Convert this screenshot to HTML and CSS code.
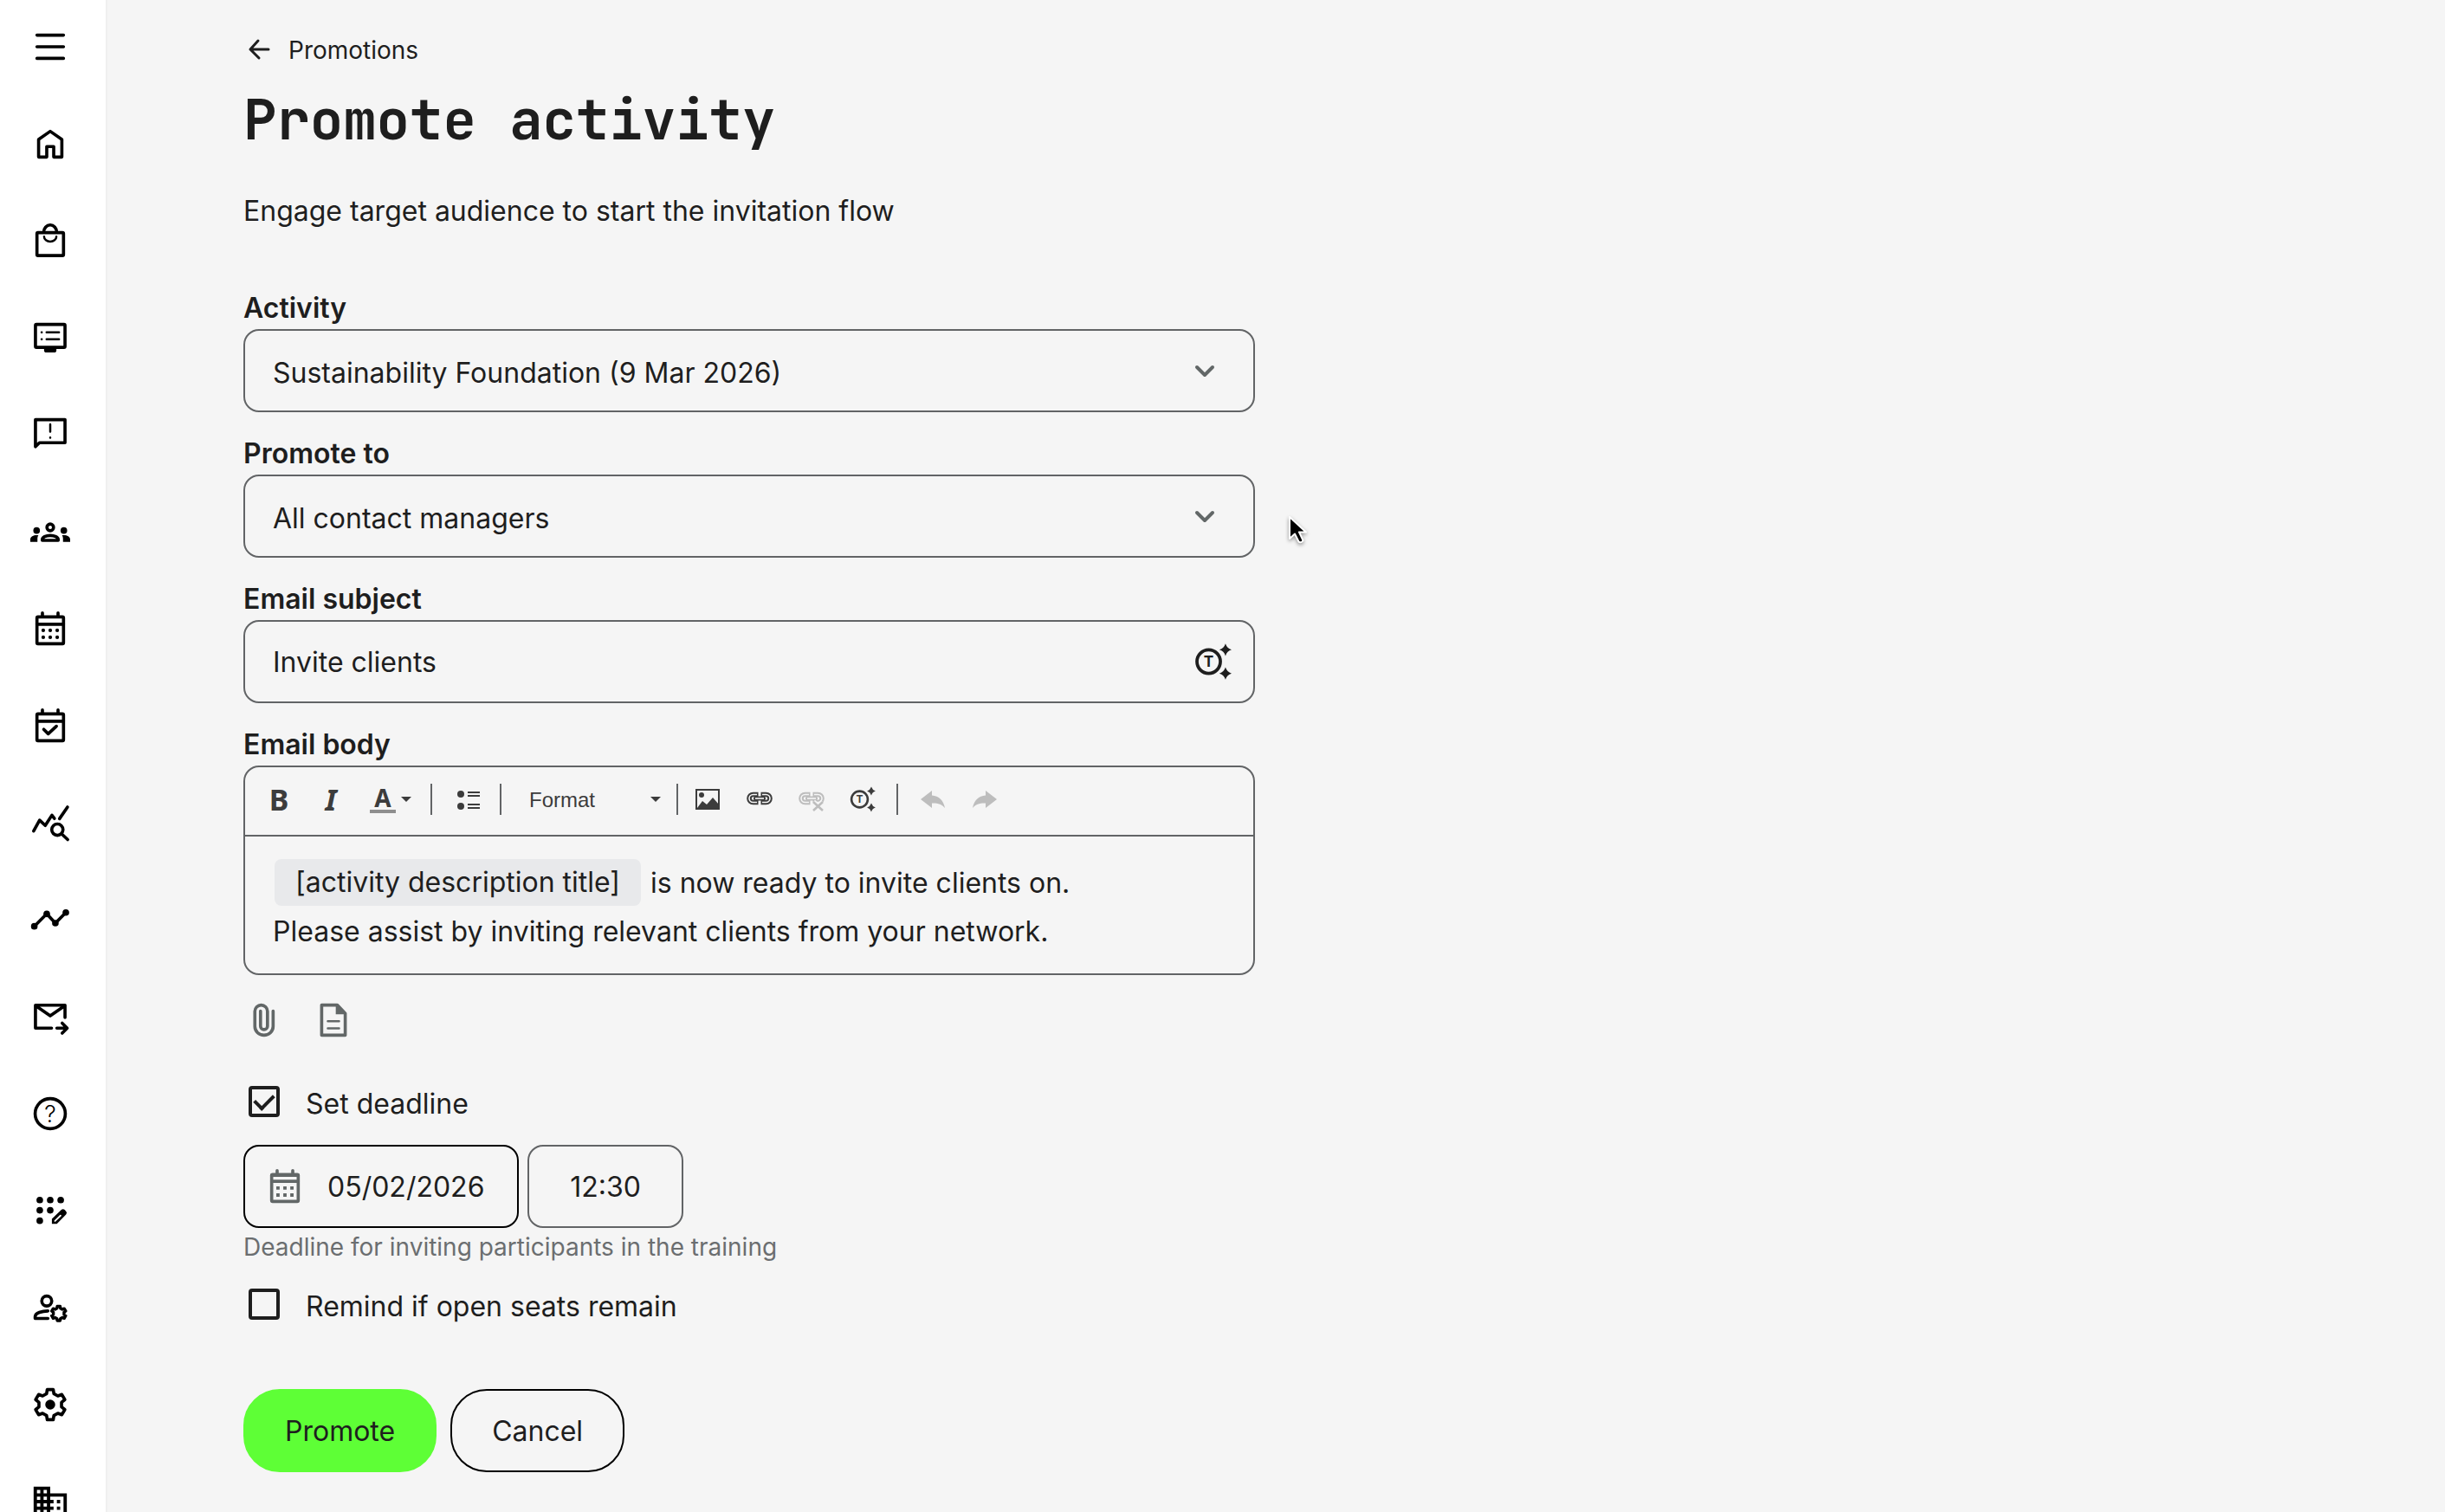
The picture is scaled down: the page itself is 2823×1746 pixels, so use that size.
FILE: index.html
```
<!DOCTYPE html>
<html lang="en">
<head>
    <meta charset="UTF-8">
    <meta name="viewport" content="width=device-width, initial-scale=1">
    <title>Promote activity</title>
    <link rel="stylesheet" href="styles.css">
</head>
<body>
    <!-- Shared icons -->
    <svg class="sprite" aria-hidden="true">
        <symbol id="gear" viewBox="0 0 24 24">
            <path d="M9.8 5.4 10.2 2.9H13.8L14.2 5.4 16.6 6.8 19 5.9 20.8 9 18.8 10.6V13.4L20.8 15 19 18.1 16.6 17.2 14.2 18.6 13.8 21.1H10.2L9.8 18.6 7.4 17.2 5 18.1 3.2 15 5.2 13.4V10.6L3.2 9 5 5.9 7.4 6.8z"/>
        </symbol>
        <symbol id="text-ai" viewBox="0 0 32 32">
            <circle cx="11.5" cy="16" r="9.4" fill="none" stroke="currentColor" stroke-width="2.6"/>
            <text x="11.5" y="20.4" text-anchor="middle" class="icon-letter">T</text>
            <path fill="currentColor" d="M25 1.6q1.200 3.700 4.900 4.900-3.700 1.200-4.900 4.900-1.200-3.700-4.900-4.900 3.700-1.200 4.900-4.900zM25 20.600q1.200 3.700 4.900 4.900-3.700 1.200-4.900 4.900-1.200-3.700-4.900-4.900 3.700-1.200 4.900-4.900z"/>
        </symbol>
        <symbol id="chain" viewBox="0 0 32 32">
            <path fill="none" stroke="currentColor" stroke-width="5.6" d="M14.5 10.5h-6a4.5 4.5 0 0 0 0 9h6M17.5 10.5h6a4.5 4.5 0 0 1 0 9h-6"/>
            <path fill="none" stroke="#f5f5f5" stroke-width="1.6" d="M13 10.5H8.500a4.5 4.5 0 0 0 0 9H13M19 10.5h4.500a4.5 4.5 0 0 1 0 9H19"/>
            <path fill="none" stroke="currentColor" stroke-width="5" stroke-linecap="round" d="M11.5 15h9"/>
            <path fill="none" stroke="#f5f5f5" stroke-width="1.6" d="M11 15h10"/>
        </symbol>
        <symbol id="chevron" viewBox="0 0 24 24">
            <path fill="none" stroke="currentColor" stroke-width="2" stroke-linecap="round" stroke-linejoin="round" d="M7.500 10l4.500 4.500 4.500-4.500"/>
        </symbol>
    </svg>

    <div class="layout">
        <nav class="sidebar" aria-label="Main">
            <button class="nav-item" type="button" aria-label="Menu">
                <svg class="icon" viewBox="0 0 24 24"><path d="M4 5h16M4 12h16M4 19h16"/></svg>
            </button>
            <a class="nav-item" href="#" aria-label="Home">
                <svg class="icon" viewBox="0 0 24 24"><path d="M5 20V9.400L12 4.500l7 4.900V20h-4.900v-6.300H9.900V20z"/></svg>
            </a>
            <a class="nav-item" href="#" aria-label="Shop">
                <svg class="icon" viewBox="0 0 24 24"><rect x="4" y="7.100" width="16" height="13.800" rx=".6"/><path d="M8.100 6.800a3.900 4.300 0 0 1 7.800 0"/><path class="thin" d="M8.300 9.500a3.700 3 0 0 0 7.400 0"/></svg>
            </a>
            <a class="nav-item" href="#" aria-label="Courses">
                <svg class="icon" viewBox="0 0 24 24"><rect x="3.100" y="4" width="17.800" height="13.800" rx=".6"/><path class="solid" d="M8.300 18h7.400v1.500q0 1.400-1.400 1.400H9.700q-1.400 0-1.400-1.400z"/><path class="thin" d="M9.800 8.700h7.500M9.800 12.900h7.500M6.800 8.700h.1M6.800 12.900h.1"/></svg>
            </a>
            <a class="nav-item" href="#" aria-label="Feedback">
                <svg class="icon" viewBox="0 0 24 24"><path d="M3.100 19.200V2.900h17.800v13.900H5.500z"/><path class="thin" d="M12 5.700v4.500M12 13.700v.1"/></svg>
            </a>
            <a class="nav-item" href="#" aria-label="Groups">
                <svg class="icon" viewBox="0 0 24 24"><circle cx="12" cy="9.400" r="2"/><path d="M7.200 17.200v-.4c0-1.500 2.200-2.500 4.800-2.500s4.800 1 4.800 2.500v.4z"/><g class="solid"><circle cx="3.800" cy="11.300" r="2"/><circle cx="20.200" cy="11.300" r="2"/><path d="M0 18.100v-1.500c0-1.500 1.800-2.500 3.800-2.500h1.100c-.5.800-.6 1.500-.6 2.400v1.600zM24 18.100v-1.500c0-1.500-1.800-2.500-3.800-2.500h-1.100c.5.800.6 1.500.6 2.400v1.600z"/></g></svg>
            </a>
            <a class="nav-item" href="#" aria-label="Calendar">
                <svg class="icon" viewBox="0 0 24 24"><rect x="4" y="4.900" width="16" height="16.200" rx=".6"/><path d="M4 9.300h16M7.300 4.500V2.500M16.700 4.500V2.500"/><g class="solid"><circle cx="7.800" cy="13" r="1.100"/><circle cx="12" cy="13" r="1.100"/><circle cx="16.200" cy="13" r="1.100"/><circle cx="7.800" cy="17.200" r="1.100"/><circle cx="12" cy="17.200" r="1.100"/><circle cx="16.200" cy="17.200" r="1.100"/></g></svg>
            </a>
            <a class="nav-item" href="#" aria-label="Bookings">
                <svg class="icon" viewBox="0 0 24 24"><rect x="4" y="4.900" width="16" height="16.200" rx=".6"/><path d="M4 9.300h16M7.300 4.500V2.500M16.700 4.500V2.500M8.100 14.200l2.700 2.700 4.900-4.600"/></svg>
            </a>
            <a class="nav-item" href="#" aria-label="Analytics">
                <svg class="icon" viewBox="0 0 24 24"><path d="M2 17l3.600-6.500L9 13.700l4-6.200 1.500 2M17.600 9.600l4.800-7"/><circle cx="16.300" cy="16.200" r="3.400"/><path d="M18.900 18.800l3.600 3.400"/></svg>
            </a>
            <a class="nav-item" href="#" aria-label="Trends">
                <svg class="icon" viewBox="0 0 24 24"><path d="M2.400 16L9.900 8.500l5.200 5.600 6.300-6.400"/><g class="solid"><circle cx="2.400" cy="16" r="2"/><circle cx="9.900" cy="8.500" r="2"/><circle cx="15.100" cy="14.100" r="2"/><circle cx="21.400" cy="7.700" r="2"/></g></svg>
            </a>
            <a class="nav-item" href="#" aria-label="Outgoing mail">
                <svg class="icon" viewBox="0 0 24 24"><path d="M12.800 18.900H3.100V5.100h17.800v7.400M3.500 5.600l8.500 5.900 8.500-5.900M16 18.900h6M19.200 15.900l3 3-3 3"/></svg>
            </a>
            <a class="nav-item" href="#" aria-label="Help">
                <svg class="icon" viewBox="0 0 24 24"><circle cx="12" cy="12" r="9.100"/><text x="12" y="17" text-anchor="middle" class="icon-question">?</text></svg>
            </a>
            <a class="nav-item" href="#" aria-label="Templates">
                <svg class="icon" viewBox="0 0 24 24"><g class="solid"><circle cx="5.700" cy="5.600" r="2"/><circle cx="12" cy="5.600" r="2"/><circle cx="18.300" cy="5.600" r="2"/><circle cx="5.700" cy="11.800" r="2"/><circle cx="12" cy="11.800" r="2"/><circle cx="5.700" cy="18.100" r="2"/><path d="M13 19.900v-3l5.700-5.400q1-.9 2 0l.8.900q.9.900 0 1.900L16 19.900z"/></g><path class="light" d="M14.900 18.200l3.300-3.200"/></svg>
            </a>
            <a class="nav-item" href="#" aria-label="Users">
                <svg class="icon" viewBox="0 0 24 24"><circle cx="9.900" cy="8" r="3"/><path d="M10.600 14c-3.500 0-7.700 1.200-7.700 3.500v1h7.700"/><use href="#gear" x="11.400" y="9.800" width="11.400" height="11.400" class="bold"/></svg>
            </a>
            <a class="nav-item" href="#" aria-label="Settings">
                <svg class="icon" viewBox="0 0 24 24"><use href="#gear" width="24" height="24"/><circle class="solid" cx="12" cy="12" r="3"/></svg>
            </a>
            <a class="nav-item" href="#" aria-label="Company">
                <svg class="icon" viewBox="0 0 24 24"><path class="solid" d="M12 7V3H2v18h20V7H12zM6 19H4v-2h2v2zm0-4H4v-2h2v2zm0-4H4V9h2v2zm0-4H4V5h2v2zm4 12H8v-2h2v2zm0-4H8v-2h2v2zm0-4H8V9h2v2zm0-4H8V5h2v2zm10 12h-8v-2h2v-2h-2v-2h2v-2h-2V9h8v10zm-2-8h-2v2h2v-2zm0 4h-2v2h2v-2z"/></svg>
            </a>
        </nav>

        <main class="content">
            <a class="back-link" href="#">
                <svg class="back-icon" viewBox="0 0 36 36"><path d="M29 17H8M17 7L8 17l10 10"/></svg>
                Promotions
            </a>
            <h1 class="page-title">Promote activity</h1>
            <p class="intro">Engage target audience to start the invitation flow</p>

            <form class="form">
                <div class="field">
                    <label class="field-label" for="activity">Activity</label>
                    <div class="control">
                        <select class="input select" id="activity">
                            <option>Sustainability Foundation (9 Mar 2026)</option>
                        </select>
                        <svg class="select-arrow"><use href="#chevron"/></svg>
                    </div>
                </div>

                <div class="field">
                    <label class="field-label" for="promoteTo">Promote to</label>
                    <div class="control">
                        <select class="input select" id="promoteTo">
                            <option>All contact managers</option>
                        </select>
                        <svg class="select-arrow"><use href="#chevron"/></svg>
                    </div>
                </div>

                <div class="field">
                    <label class="field-label" for="subject">Email subject</label>
                    <div class="control">
                        <input class="input" id="subject" type="text" value="Invite clients">
                        <button class="insert-button" type="button" aria-label="Insert text tag">
                            <svg class="insert-icon"><use href="#text-ai"/></svg>
                        </button>
                    </div>
                </div>

                <div class="field">
                    <div class="field-label" id="bodyLabel">Email body</div>
                    <div class="editor">
                        <div class="toolbar" role="toolbar">
                            <button class="tool tool-letter" type="button" aria-label="Bold">B</button>
                            <button class="tool tool-letter italic" type="button" aria-label="Italic">I</button>
                            <button class="tool tool-color" type="button" aria-label="Text color"><span class="color-letter">A</span><span class="caret"></span></button>
                            <span class="separator"></span>
                            <button class="tool tool-list" type="button" aria-label="Bulleted list">
                                <svg class="tool-icon" viewBox="0 0 32 32"><g fill="currentColor"><circle cx="7" cy="10" r="4"/><circle cx="7" cy="24" r="4"/></g><path stroke="currentColor" stroke-width="2" d="M15 8h14M15 12h14M15 22h14M15 26h14"/></svg>
                            </button>
                            <span class="separator"></span>
                            <div class="format">
                                <select class="format-select" aria-label="Format">
                                    <option>Format</option>
                                </select>
                                <span class="caret format-caret"></span>
                            </div>
                            <span class="separator"></span>
                            <button class="tool" type="button" aria-label="Image">
                                <svg class="tool-icon" viewBox="0 0 32 32"><rect x="3" y="5" width="26" height="22" fill="none" stroke="currentColor" stroke-width="2"/><g fill="currentColor"><circle cx="9" cy="11" r="3"/><path d="M4 26l6-8 5 4 7-8 7 8v4z"/></g></svg>
                            </button>
                            <button class="tool" type="button" aria-label="Link"><svg class="tool-icon"><use href="#chain"/></svg></button>
                            <button class="tool" type="button" aria-label="Unlink" disabled>
                                <svg class="tool-icon" viewBox="0 0 32 32"><use href="#chain" width="32" height="32"/><path fill="none" stroke="#f5f5f5" stroke-width="6" d="M18 19l11 10M29 19L18 29"/><path fill="none" stroke="currentColor" stroke-width="2.6" d="M18 19l11 10M29 19L18 29"/></svg>
                            </button>
                            <button class="tool" type="button" aria-label="Insert text tag"><svg class="tool-icon"><use href="#text-ai"/></svg></button>
                            <span class="separator"></span>
                            <button class="tool tool-undo" type="button" aria-label="Undo" disabled>
                                <svg class="tool-icon" viewBox="0 0 32 32"><path fill="currentColor" d="M2 16L15 6v5.500c8 .5 13.500 6 15 14.500-3.500-4.500-8.500-5.800-15-5.500V26z"/></svg>
                            </button>
                            <button class="tool" type="button" aria-label="Redo" disabled>
                                <svg class="tool-icon" viewBox="0 0 32 32"><path fill="currentColor" d="M30 16L17 6v5.500c-8 .5-13.500 6-15 14.500 3.500-4.500 8.500-5.800 15-5.500V26z"/></svg>
                            </button>
                        </div>
                        <div class="editor-body" contenteditable="true" role="textbox" aria-multiline="true" aria-labelledby="bodyLabel">
                            <p><span class="tag" contenteditable="false">[activity description title]</span> is now ready to invite clients on.</p>
                            <p>Please assist by inviting relevant clients from your network.</p>
                        </div>
                    </div>
                </div>

                <div class="attachments">
                    <button class="attach-button" type="button" aria-label="Attach file">
                        <svg class="icon" viewBox="0 0 24 24"><path d="M17.400 6.500v9.300a5.500 5.300 0 0 1-11 0V6.700a3.800 3.800 0 0 1 7.600 0v8.900a2.100 2.100 0 0 1-4.200 0V6.500"/></svg>
                    </button>
                    <button class="attach-button" type="button" aria-label="Attach document">
                        <svg class="icon" viewBox="0 0 24 24"><path d="M4.900 2.900h9.400l4.800 5v13.200H4.900z"/><path class="solid" d="M13.400 2.500h1.200l4.900 5v1h-6.100z"/><path class="thin" d="M8.600 12.600h6.800M8.600 16.900h6.800"/></svg>
                    </button>
                </div>

                <label class="check-row">
                    <input class="checkbox" type="checkbox" checked>
                    <span class="check-text">Set deadline</span>
                </label>

                <div class="deadline">
                    <div class="date-box">
                        <svg class="icon date-icon" viewBox="0 0 24 24"><rect x="4" y="4.900" width="16" height="16.200" rx=".6"/><path d="M4 5.300h16M4 8.900h16M7.300 4.500V2.500M16.700 4.500V2.500"/><path class="solid" d="M6.800 12h2v2h-2zM11 12h2v2h-2zM15.200 12h2v2h-2zM6.800 16.200h2v2h-2zM11 16.200h2v2h-2zM15.200 16.200h2v2h-2z"/></svg>
                        <input class="date-input" type="text" value="05/02/2026" aria-label="Deadline date" aria-describedby="deadlineHelp">
                    </div>
                    <input class="time-input" type="text" value="12:30" aria-label="Deadline time">
                </div>
                <p class="help" id="deadlineHelp">Deadline for inviting participants in the training</p>

                <label class="check-row remind">
                    <input class="checkbox" type="checkbox">
                    <span class="check-text">Remind if open seats remain</span>
                </label>

                <div class="actions">
                    <button class="button primary" type="submit">Promote</button>
                    <button class="button" type="button">Cancel</button>
                </div>
            </form>
        </main>
    </div>

    <svg class="cursor" viewBox="0 0 24 36" aria-hidden="true"><path d="M3 3v25l6-5.500 4.500 9q1.500 1.500 4 0l1-1.500-4.500-9.500h8z" fill="#000" stroke="#fff" stroke-width="2" stroke-linejoin="round"/></svg>
</body>
</html>
```

FILE: styles.css
```
* {
    box-sizing: border-box;
}

body {
    margin: 0;
    font-family: Inter, "Liberation Sans", sans-serif;
    font-size: 32px;
    color: #1e1e1e;
    background-color: #f5f5f5;
}

button,
input,
select {
    font: inherit;
    color: inherit;
}

p {
    margin: 0;
}

.sprite {
    display: none;
}

.layout {
    display: flex;
    height: 100vh;
    overflow: hidden;
}

/* Sidebar */
.sidebar {
    display: flex;
    flex-direction: column;
    flex-shrink: 0;
    gap: 66px;
    width: 124px;
    padding: 31px 0 0 35px;
    overflow: hidden;
    background-color: #ffffff;
    border-right: 2px solid #efefef;
}

.nav-item {
    display: block;
    flex-shrink: 0;
    width: 46px;
    height: 46px;
    padding: 0;
    border: none;
    background: none;
    color: #000000;
    cursor: pointer;
}

.icon {
    display: block;
    width: 46px;
    height: 46px;
    fill: none;
    stroke: currentColor;
    stroke-width: 1.9;
    stroke-linecap: round;
    stroke-linejoin: round;
}

.icon .thin {
    stroke-width: 1.3;
}

.icon .bold {
    stroke-width: 3.8;
}

.icon .solid {
    fill: currentColor;
    stroke: none;
}

.icon .light {
    stroke: #ffffff;
    stroke-width: 1;
}

.icon-question {
    font-size: 14px;
    font-weight: 300;
    fill: currentColor;
    stroke: none;
}

.icon-letter {
    font-size: 12px;
    font-weight: 700;
    fill: currentColor;
}

/* Page */
.content {
    flex: 1;
    padding: 38px 32px 48px 157px;
}

.back-link {
    display: flex;
    align-items: center;
    gap: 16px;
    width: fit-content;
    font-size: 28px;
    line-height: 40px;
    color: inherit;
    text-decoration: none;
}

.back-icon {
    width: 36px;
    height: 36px;
    fill: none;
    stroke: currentColor;
    stroke-width: 3;
    stroke-linecap: round;
    stroke-linejoin: round;
}

.page-title {
    margin: 20px 0 42px;
    font-family: "JetBrains Mono", "DejaVu Sans Mono", monospace;
    font-size: 64px;
    line-height: 80px;
    font-weight: 700;
}

.intro {
    margin-bottom: 68px;
    line-height: 48px;
}

.form {
    max-width: 1168px;
}

.field {
    margin-bottom: 28px;
}

.field-label {
    display: block;
    margin-bottom: 4px;
    font-weight: 600;
    line-height: 40px;
}

.control {
    position: relative;
    display: flex;
    align-items: center;
    height: 96px;
    border: 2px solid #626466;
    border-radius: 18px;
}

.input {
    flex: 1;
    min-width: 0;
    height: 100%;
    padding: 0 32px;
    border: none;
    background: none;
    outline: none;
}

.select {
    appearance: none;
    padding-top: 4px;
}

.select-arrow {
    position: absolute;
    right: 32px;
    width: 48px;
    height: 48px;
    color: #626767;
    pointer-events: none;
}

.insert-button {
    display: flex;
    margin-right: 22px;
    padding: 0;
    border: none;
    background: none;
}

.insert-icon {
    width: 46px;
    height: 46px;
}

/* Editor */
.editor {
    border: 2px solid #626466;
    border-radius: 18px;
}

.toolbar {
    display: flex;
    align-items: center;
    height: 80px;
    padding: 0 0 4px 9px;
    border-bottom: 2px solid #626466;
    color: #3c3c3c;
}

.tool {
    display: flex;
    align-items: center;
    justify-content: center;
    width: 60px;
    height: 60px;
    padding: 0;
    border: none;
    background: none;
}

.tool:disabled {
    color: #bdbdbd;
}

.tool-icon {
    width: 32px;
    height: 32px;
}

.tool-letter {
    font-family: "Noto Sans", sans-serif;
    font-size: 34px;
    font-weight: 700;
    line-height: 48px;
}

.italic {
    font-style: italic;
}

.tool-color {
    justify-content: flex-start;
    gap: 6px;
    width: 77px;
    padding-left: 15px;
}

.color-letter {
    width: 30px;
    border-bottom: 4px solid #8e8e8e;
    font-family: "Noto Sans", sans-serif;
    font-size: 28px;
    font-weight: 700;
    line-height: 28px;
}

.caret {
    border: 6px solid transparent;
    border-top-color: #3c3c3c;
    border-bottom: none;
}

.separator {
    width: 2px;
    height: 36px;
    margin: 0 4px 0 8px;
    background-color: #626466;
}

.tool-list {
    width: 66px;
    padding-left: 10px;
}

.tool-undo {
    margin-left: 6px;
}

.format {
    position: relative;
    flex: 0 0 190px;
}

.format-select {
    width: 100%;
    height: 48px;
    padding: 0 28px;
    border: none;
    background: none;
    appearance: none;
    font-family: "Liberation Sans", Arial, sans-serif;
    font-size: 24px;
}

.format-caret {
    position: absolute;
    top: 21px;
    right: 10px;
    pointer-events: none;
}

.editor-body {
    padding: 26px 32px 20px;
    line-height: 56px;
    outline: none;
}

.tag {
    display: inline-block;
    height: 54px;
    margin: 0 2px;
    padding: 0 24px;
    border-radius: 8px;
    background-color: #e8e9eb;
    line-height: 54px;
    vertical-align: top;
}

.attachments {
    display: flex;
    gap: 32px;
    margin-bottom: 46px;
    color: #626767;
}

.attach-button {
    display: flex;
    align-items: center;
    justify-content: center;
    width: 48px;
    height: 48px;
    padding: 0;
    border: none;
    background: none;
    color: inherit;
}

/* Deadline */
.check-row {
    display: flex;
    align-items: center;
    gap: 30px;
    width: fit-content;
    height: 48px;
    padding-left: 6px;
}

.checkbox {
    appearance: none;
    display: grid;
    place-items: center;
    width: 36px;
    height: 36px;
    margin: 0;
    border: 4px solid #1e1e1e;
    border-radius: 4px;
}

/* Tick mark */
.checkbox:checked::before {
    content: "";
    width: 18px;
    height: 10px;
    margin-bottom: 5px;
    border: solid #1e1e1e;
    border-width: 0 0 4px 4px;
    transform: rotate(-45deg);
}

.check-text {
    padding-top: 4px;
}

.deadline {
    display: flex;
    gap: 10px;
    margin-top: 26px;
}

.date-box {
    display: flex;
    align-items: center;
    width: 318px;
    height: 96px;
    padding-left: 23px;
    border: 2px solid #000000;
    border-radius: 18px;
}

.date-icon {
    flex-shrink: 0;
    color: #626767;
}

.date-input {
    width: 100%;
    padding: 0 0 0 26px;
    border: none;
    background: none;
    outline: none;
}

.time-input {
    width: 180px;
    height: 96px;
    padding: 0;
    border: 2px solid #626466;
    border-radius: 18px;
    background: none;
    text-align: center;
}

.help {
    margin-top: 2px;
    font-size: 28px;
    line-height: 40px;
    color: #6b6e70;
}

.remind {
    margin-top: 22px;
}

.actions {
    display: flex;
    gap: 16px;
    margin-top: 74px;
}

.button {
    height: 96px;
    padding: 0 46px;
    border: 2px solid #000000;
    border-radius: 42px;
    background: none;
    cursor: pointer;
}

.primary {
    border-color: #5eff36;
    background-color: #5eff36;
}

/* Mouse pointer */
.cursor {
    position: absolute;
    top: 594px;
    left: 1486px;
    width: 24px;
    height: 36px;
    filter: drop-shadow(0 2px 2px rgba(0, 0, 0, 0.4));
}
```
